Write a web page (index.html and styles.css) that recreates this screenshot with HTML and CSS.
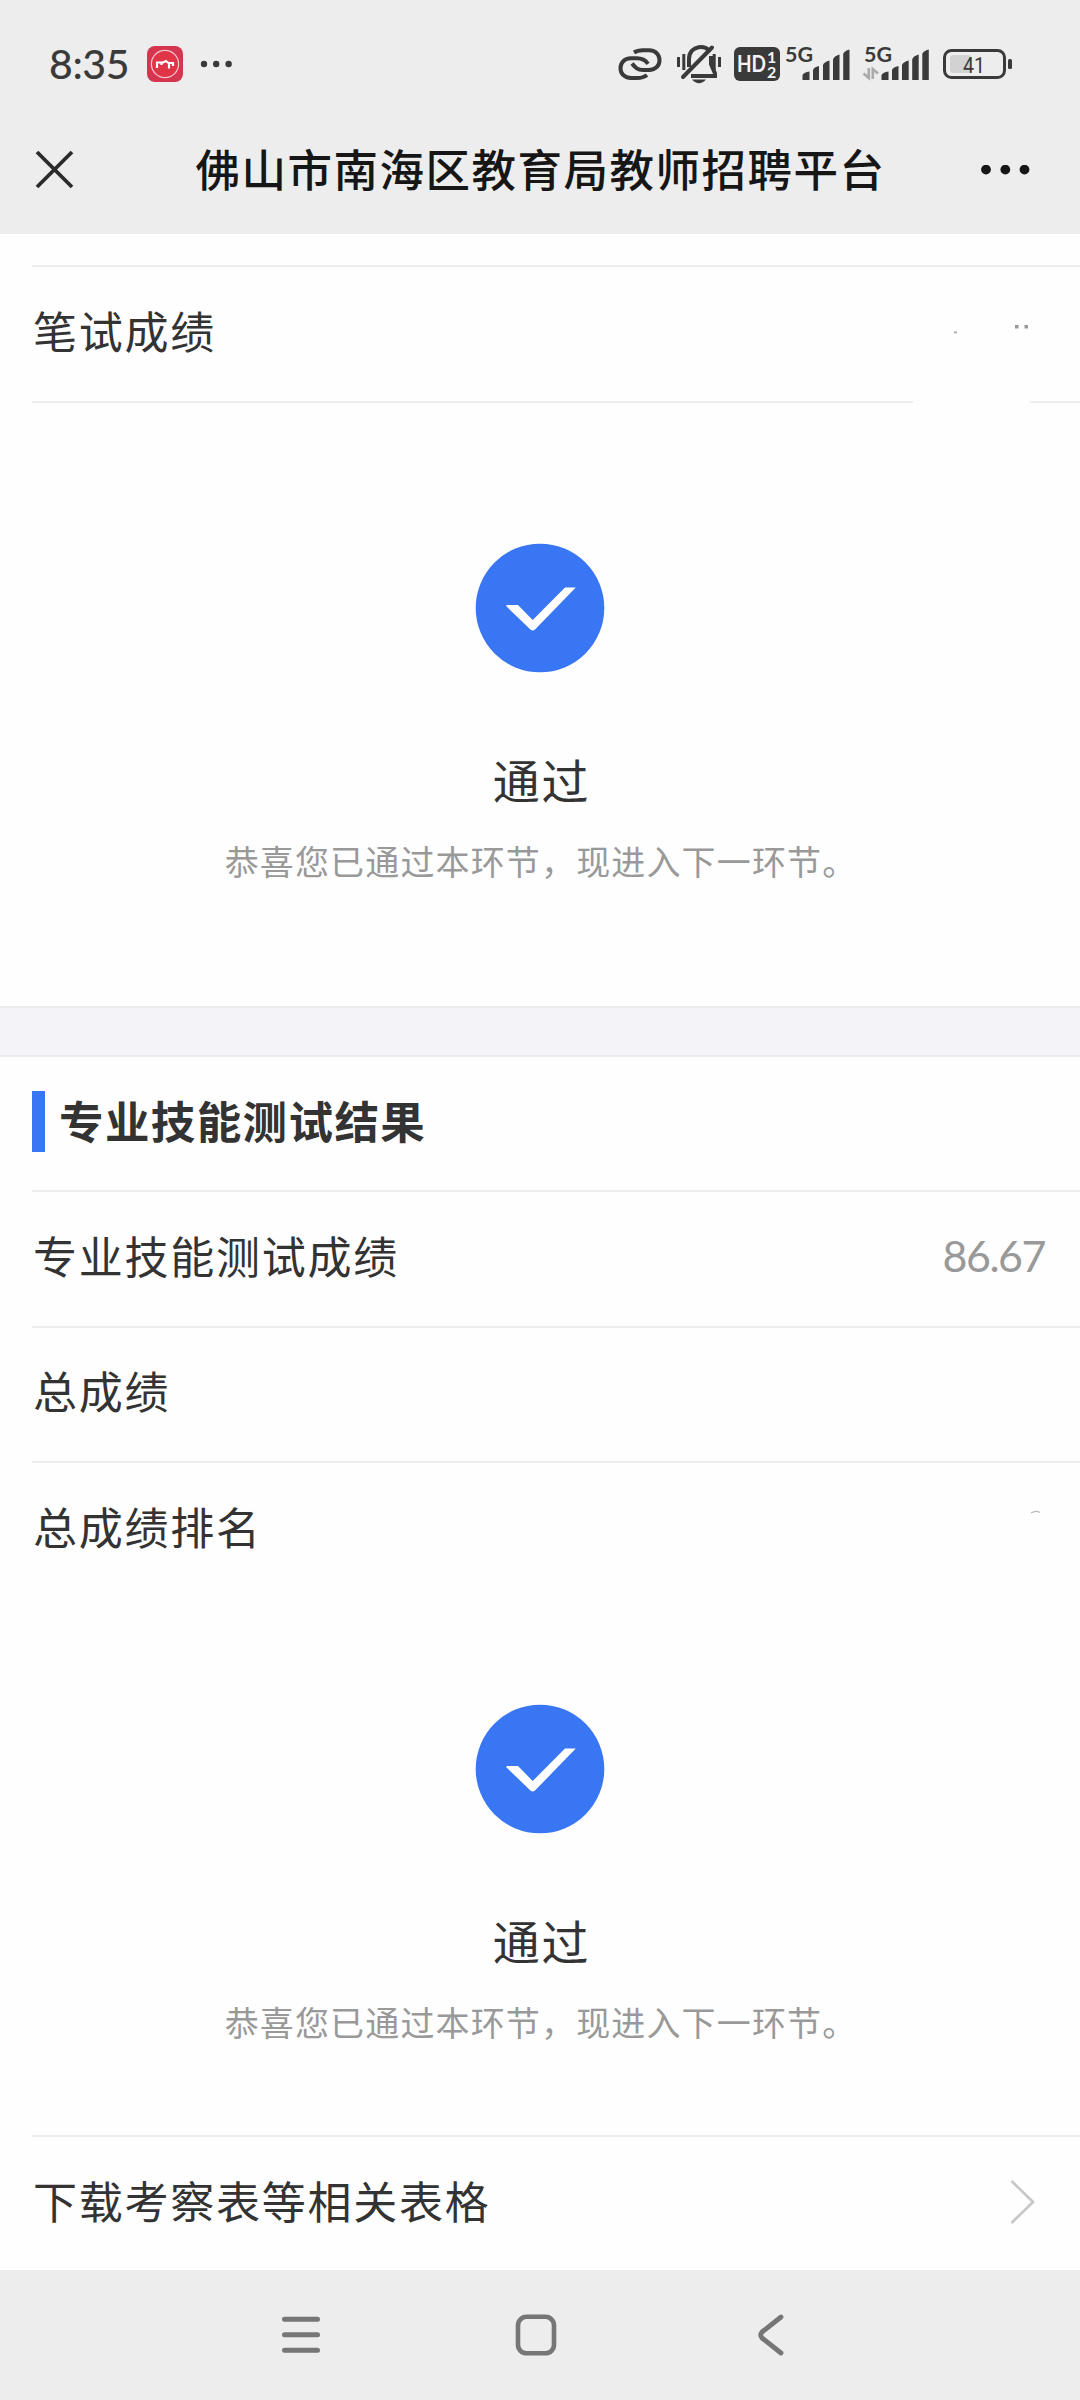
FILE: index.html
```html
<!DOCTYPE html>
<html lang="zh-CN">
<head>
<meta charset="utf-8">
<title>佛山市南海区教育局教师招聘平台</title>
<link rel="stylesheet" href="styles.css">
</head>
<body>
<header class="top">
  <div class="status">
    <span class="clock">8:35</span>
    <svg class="app" width="38" height="38" viewBox="0 0 38 38">
      <rect x="1" y="1" width="36" height="36" rx="8" fill="#d5354f"/>
      <circle cx="19" cy="19" r="13.6" fill="#e03447" stroke="#f3c3cb" stroke-width="1.3"/>
      <path d="M11 23V17.500H17L20 16L22.500 18H28M15.500 18V20M23 18V23.500M27 17V21" fill="none" stroke="#fff" stroke-width="2.200"/>
    </svg>
    <svg class="more" width="32" height="8" viewBox="0 0 32 8" fill="#3a3a3a"><circle cx="4" cy="4" r="3.200"/><circle cx="16.200" cy="4" r="3.200"/><circle cx="28.600" cy="4" r="3.200"/></svg>
    <svg class="tray" width="400" height="60" viewBox="614 34 400 60">
      <g fill="none" stroke="#3a3a3a" stroke-width="4" stroke-linecap="butt">
        <path d="M634 52.500C637 50.500 639 50.300 643 50.300H649C663 50.300 663 70 649 70H643C637 70 635 67 632 63.500"/>
        <path d="M648 63.800C645 59.500 642 58.300 637 58.300H631C617 58.300 617 78 631 78H637C641 78 644 77.500 647 75"/>
      </g>
      <g fill="none" stroke="#3a3a3a" stroke-width="4">
        <path d="M689 67V59C689 44.500 708 44.500 709 52M711 56V64L715 73.500V76H691"/>
        <path d="M683 77L712 47.500" stroke-linecap="round"/>
        <path d="M678.500 57V67M683.800 54V70M714.200 54V70M719.500 57V67" stroke-width="3"/>
      </g>
      <path d="M692 79.500H706Q699 87 692 79.500Z" fill="#3a3a3a"/>
      <rect x="734" y="47" width="46" height="34" rx="6" fill="#3a3a3a"/>
      <g class="mark" fill="#f4f4f4">
        <text x="737" y="71.500" font-size="22" textLength="29" lengthAdjust="spacingAndGlyphs">HD</text>
        <text x="767" y="63" font-size="16">1</text>
        <text x="767" y="77.500" font-size="16">2</text>
      </g>
      <g class="mark" fill="#3a3a3a">
        <text x="785" y="62" font-size="21" textLength="28" lengthAdjust="spacingAndGlyphs">5G</text>
        <text x="864" y="62" font-size="21" textLength="28" lengthAdjust="spacingAndGlyphs">5G</text>
      </g>
      <g fill="#3a3a3a">
        <path d="M802.500 80V75Q804 72 809.500 71.500V80ZM813 80V70Q814 67 819 66V80ZM823 80V65Q824 62 829.500 60.500V80ZM833 80V59.500Q834 56 839.500 54.500V80ZM843.200 80V54Q844 51 849.500 49.500V80Z"/>
        <path d="M881.500 80V75Q883 72 888.500 71.500V80ZM892 80V70Q893 67 898.500 66V80ZM902 80V65Q903 62 908.700 60.500V80ZM912.200 80V59.500Q913 56 918.700 54.500V80ZM922.300 80V54Q923 51 928.800 49.500V80Z"/>
      </g>
      <path d="M868.800 68V78L863.500 73.500M872.800 79V69L878 73.500" fill="none" stroke="#aaa" stroke-width="2.600"/>
      <rect x="950" y="55" width="21" height="18" rx="3" fill="#d2d2d2"/>
      <rect x="944.500" y="50.500" width="60" height="27" rx="7" fill="none" stroke="#3a3a3a" stroke-width="3"/>
      <rect x="1008" y="59" width="4" height="10" rx="1.500" fill="#3a3a3a"/>
      <text class="level" x="963" y="72.500" font-size="22" fill="#3a3a3a" textLength="22" lengthAdjust="spacingAndGlyphs">41</text>
    </svg>
  </div>
  <div class="titlebar">
    <svg width="40" height="40" viewBox="0 0 40 40"><path d="M3 2L38 37M38 2L3 37" stroke="#2b2b2b" stroke-width="3.800"/></svg>
    <h1>佛山市南海区教育局教师招聘平台</h1>
    <svg width="50" height="10" viewBox="0 0 50 10" fill="#161616"><circle cx="5" cy="4.600" r="4.900"/><circle cx="24.300" cy="4.600" r="4.900"/><circle cx="43.500" cy="4.600" r="4.900"/></svg>
  </div>
</header>
<main>
  <section class="first">
    <div class="row written">
      <span>笔试成绩</span>
      <svg class="specks" width="80" height="14" viewBox="0 0 80 14" fill="#999"><rect x="3" y="8.500" width="3" height="1.800" fill="#aaa"/><rect x="64" y="2" width="3.500" height="3.500"/><rect x="73.500" y="2" width="3.500" height="3.500"/></svg>
    </div>
    <div class="rule broken"><i></i><i></i></div>
    <div class="result">
      <svg width="130" height="130" viewBox="0 0 130 130"><circle cx="65" cy="65" r="64.300" fill="#3976f4"/><path d="M32 62H43L57.700 77L90 44.500H100.800L60 86.500Q57.700 88.500 55.400 86.500L31.500 63.500Q31 62 32 62Z" fill="#fff"/></svg>
      <h2>通过</h2>
      <p>恭喜您已通过本环节，现进入下一环节。</p>
    </div>
  </section>
  <div class="band"></div>
  <section class="second">
    <div class="heading"><h3>专业技能测试结果</h3></div>
    <div class="row"><span>专业技能测试成绩</span><span class="score">86.67</span></div>
    <div class="row"><span>总成绩</span></div>
    <div class="row"><span>总成绩排名</span><svg class="arc" width="12" height="4" viewBox="0 0 12 4"><path d="M1 3Q6 0 10 2.500" fill="none" stroke="#bbb" stroke-width="1.200"/></svg></div>
    <div class="result">
      <svg width="130" height="130" viewBox="0 0 130 130"><circle cx="65" cy="65" r="64.300" fill="#3976f4"/><path d="M32 62H43L57.700 77L90 44.500H100.800L60 86.500Q57.700 88.500 55.400 86.500L31.500 63.500Q31 62 32 62Z" fill="#fff"/></svg>
      <h2>通过</h2>
      <p>恭喜您已通过本环节，现进入下一环节。</p>
    </div>
    <div class="row download"><span>下载考察表等相关表格</span><svg width="26" height="44" viewBox="0 0 26 44"><path d="M1.500 1L23 22L1.500 43" fill="none" stroke="#c8c8c8" stroke-width="2.800" stroke-linejoin="round"/></svg></div>
  </section>
</main>
<nav>
  <svg width="40" height="40" viewBox="0 0 40 40"><path d="M3.500 4.300H36.500M3.500 19.800H36.500M3.500 35.200H36.500" stroke="#767676" stroke-width="5" stroke-linecap="round"/></svg>
  <svg width="42" height="42" viewBox="0 0 42 42"><rect x="3" y="2.800" width="36" height="36.500" rx="8.500" fill="none" stroke="#767676" stroke-width="4.600"/></svg>
  <svg width="28" height="42" viewBox="0 0 28 42"><path d="M24 3L5 18Q2.500 21 5 24L24 39" fill="none" stroke="#767676" stroke-width="4.800" stroke-linecap="round" stroke-linejoin="round"/></svg>
</nav>
</body>
</html>
```

FILE: styles.css
```css
* { box-sizing: border-box; }
body {
  margin: 0;
  width: 1080px;
  height: 2400px;
  display: flex;
  flex-direction: column;
  background: #fefefe;
  color: #333;
  font-family: "Noto Sans CJK SC", sans-serif;
  overflow: hidden;
}
svg { display: block; flex: none; }
h1, h2, h3, p { margin: 0; white-space: nowrap; }
.top { height: 234px; background: #ededed; }
.status { height: 128px; display: flex; align-items: center; padding-left: 49px; }
.clock {
  width: 97px;
  font: 500 41px/60px Lato, sans-serif;
  letter-spacing: -0.4px;
  color: #3a3a3a;
}
.more { margin-left: 16px; }
.tray { margin-left: 382px; }
.mark { font-family: Lato, sans-serif; font-weight: 700; }
.level { font-family: Roboto, sans-serif; font-weight: 400; }
.titlebar {
  height: 84px;
  display: flex;
  align-items: center;
  justify-content: space-between;
  padding: 0 49px 0 34px;
}
.titlebar h1 {
  margin-left: 26px;
  color: #161616;
  font-size: 44.5px;
  line-height: 66px;
  font-weight: 500;
  letter-spacing: 1.5px;
  padding-bottom: 5px;
}
main { height: 2036px; }
.first { height: 771.5px; padding-top: 31px; }
.row {
  height: 136px;
  margin-left: 32px;
  padding: 0 32px 8px 1px;
  border-top: 2px solid #eee;
  display: flex;
  align-items: center;
  justify-content: space-between;
  font-size: 44px;
  line-height: 66px;
  letter-spacing: 1.75px;
}
.specks { margin-right: 17px; }
.rule { height: 2px; display: flex; justify-content: space-between; margin-left: 32px; }
.rule i { background: #eee; width: 881px; }
.rule i + i { width: 50px; }
.result {
  height: 602px;
  display: flex;
  flex-direction: column;
  align-items: center;
  padding-top: 140px;
}
.result h2 {
  margin-top: 71px;
  margin-left: 3px;
  font-size: 47px;
  line-height: 70px;
  font-weight: 400;
  letter-spacing: 1.7px;
}
.result p {
  margin-top: 22px;
  margin-left: 2px;
  color: #999;
  font-size: 34px;
  line-height: 50px;
  letter-spacing: 1.15px;
}
.band {
  height: 51.5px;
  background: #f4f3f8;
  border-top: 2px solid #ececee;
  border-bottom: 2px solid #ececee;
}
.heading {
  height: 133px;
  display: flex;
  align-items: center;
  padding: 0 0 5px 32px;
}
.heading h3 {
  border-left: 13px solid #3976f4;
  height: 61px;
  padding-left: 14px;
  font-size: 44.5px;
  line-height: 58px;
  letter-spacing: 1.4px;
}
.score {
  color: #999;
  font-family: Lato, sans-serif;
  font-size: 43px;
  letter-spacing: -1.5px;
  padding: 2px 3px 0 0;
}
.second .row { height: 135.5px; }
.arc { margin: -28px 6px 0 0; }
.second .result { height: 538.5px; padding-top: 107.5px; }
.second .download { padding-right: 44px; }
.download svg { margin-top: 5px; }
nav {
  height: 130px;
  background: #ededed;
  display: flex;
  align-items: center;
  padding: 0 0 0 281px;
}
nav svg + svg { margin-left: 194px; }
nav svg + svg + svg { margin-left: 200px; }
```
